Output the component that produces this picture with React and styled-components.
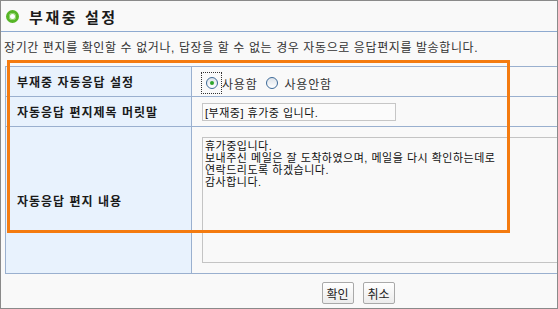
import React from "react";
import styled, { createGlobalStyle } from "styled-components";

const GlobalStyle = createGlobalStyle`
  body {
    margin: 0;
    background: #ffffff;
    font-family: "Liberation Sans", "Noto Sans CJK KR", sans-serif;
    color: #222;
  }
`;

const Window = styled.div`
  width: 558px;
  height: 309px;
  box-sizing: border-box;
  border: 1px solid #8a8a8a;
  background: #f9f9f9;
  overflow: hidden;
`;

const Header = styled.div`
  height: 30px;
  display: flex;
  align-items: center;
  padding-left: 5px;
  gap: 10px;
  border-bottom: 1px solid #8eaad0;
`;

const Ring = styled.span`
  width: 13px;
  height: 13px;
  box-sizing: border-box;
  border-radius: 50%;
  border: 3px solid #56b526;
  box-shadow: inset 0 0 0 1px #8fd46a;
  background: #fff;
  margin-top: 1px;
`;

const Title = styled.h1`
  margin: 0;
  font-size: 15px;
  font-weight: 700;
  letter-spacing: 2.6px;
  color: #1b1b1b;
`;

const Desc = styled.p`
  margin: 0;
  height: 34px;
  box-sizing: border-box;
  padding: 0 0 5px 3px;
  display: flex;
  align-items: center;
  font-size: 12px;
  color: #333;
  letter-spacing: 0.6px;
`;

const TableWrap = styled.div`
  position: relative;
  margin-left: 4px;
  width: 640px;
`;

const Table = styled.div`
  display: grid;
  grid-template-columns: 186px 1fr;
  grid-template-rows: 30px 30px 147px;
  border-top: 1px solid #9ab0cf;
  border-left: 1px solid #9ab0cf;
`;

const Label = styled.div`
  box-sizing: border-box;
  background: #e8f2fd;
  border-right: 1px solid #9ab0cf;
  border-bottom: 1px solid #9ab0cf;
  display: flex;
  align-items: center;
  padding-left: 11px;
  font-size: 12px;
  font-weight: 700;
  letter-spacing: 1px;
  color: #1a1a1a;
`;

const Value = styled.div`
  box-sizing: border-box;
  border-bottom: 1px solid #9ab0cf;
  display: flex;
  align-items: ${(p) => (p.$top ? "flex-start" : "center")};
  padding: ${(p) => (p.$top ? "10px 0 0 10px" : "0 0 0 10px")};
`;

const RadioGroup = styled.div`
  display: flex;
  align-items: center;
  font-size: 12px;
  color: #333;
  margin-left: -1px;
  margin-top: 3px;
`;

const Focus = styled.span`
  display: flex;
  align-items: center;
  justify-content: center;
  width: 21px;
  height: 22px;
  box-sizing: border-box;
  border: 1px dotted #333;
`;

const Radio = styled.span`
  width: 12px;
  height: 12px;
  box-sizing: border-box;
  border-radius: 50%;
  border: 1px solid #3d6a98;
  background: linear-gradient(#dde3ea, #ffffff);
  display: flex;
  align-items: center;
  justify-content: center;
  margin-left: ${(p) => p.$gap || 0}px;
  &::after {
    content: "";
    width: 4px;
    height: 4px;
    border-radius: 50%;
    background: ${(p) => (p.$checked ? "#2ea52a" : "transparent")};
  }
`;

const RadioText = styled.span`
  margin-left: ${(p) => p.$gap || 0}px;
  letter-spacing: 0.8px;
`;

const TextInput = styled.div`
  width: 194px;
  height: 18px;
  box-sizing: border-box;
  border: 1px solid #c6c6c6;
  background: #fbfbfb;
  font-size: 11px;
  letter-spacing: 0.5px;
  padding-left: 2px;
  display: flex;
  align-items: center;
  color: #111;
`;

const TextArea = styled.div`
  width: 420px;
  height: 126px;
  box-sizing: border-box;
  border: 1px solid #c4c4c4;
  background: #f9f9f9;
  padding: 2px 0 0 2px;
  font-size: 11px;
  line-height: 12px;
  letter-spacing: 0.5px;
  color: #111;
  white-space: pre-line;
`;

const Highlight = styled.div`
  position: absolute;
  top: -6px;
  left: 2px;
  width: 503px;
  height: 173px;
  box-sizing: border-box;
  border: 3px solid #f47b10;
  pointer-events: none;
`;

const Footer = styled.div`
  display: flex;
  justify-content: center;
  gap: 9px;
  padding: 8px 0 0 158px;
`;

const Button = styled.button`
  width: 32px;
  height: 22px;
  padding: 0;
  border: 1px solid #a9a9a9;
  border-radius: 2px;
  background: linear-gradient(#ffffff, #ececec);
  font-family: "Liberation Sans", "Noto Sans CJK KR", sans-serif;
  font-size: 12px;
  color: #222;
`;

const message = `휴가중입니다.
보내주신 메일은 잘 도착하였으며, 메일을 다시 확인하는데로
연락드리도록 하겠습니다.
감사합니다.`;

export default function App() {
  return (
    <>
      <GlobalStyle />
      <Window>
        <Header>
          <Ring />
          <Title>부재중 설정</Title>
        </Header>
        <Desc>
          장기간 편지를 확인할 수 없거나, 답장을 할 수 없는 경우 자동으로 응답편지를 발송합니다.
        </Desc>
        <TableWrap>
          <Table>
            <Label>부재중 자동응답 설정</Label>
            <Value>
              <RadioGroup>
                <Focus>
                  <Radio $checked />
                </Focus>
                <RadioText>사용함</RadioText>
                <Radio $gap={8} />
                <RadioText $gap={7}>사용안함</RadioText>
              </RadioGroup>
            </Value>
            <Label>자동응답 편지제목 머릿말</Label>
            <Value>
              <TextInput>[부재중] 휴가중 입니다.</TextInput>
            </Value>
            <Label>자동응답 편지 내용</Label>
            <Value $top>
              <TextArea>{message}</TextArea>
            </Value>
          </Table>
          <Highlight />
        </TableWrap>
        <Footer>
          <Button>확인</Button>
          <Button>취소</Button>
        </Footer>
      </Window>
    </>
  );
}
